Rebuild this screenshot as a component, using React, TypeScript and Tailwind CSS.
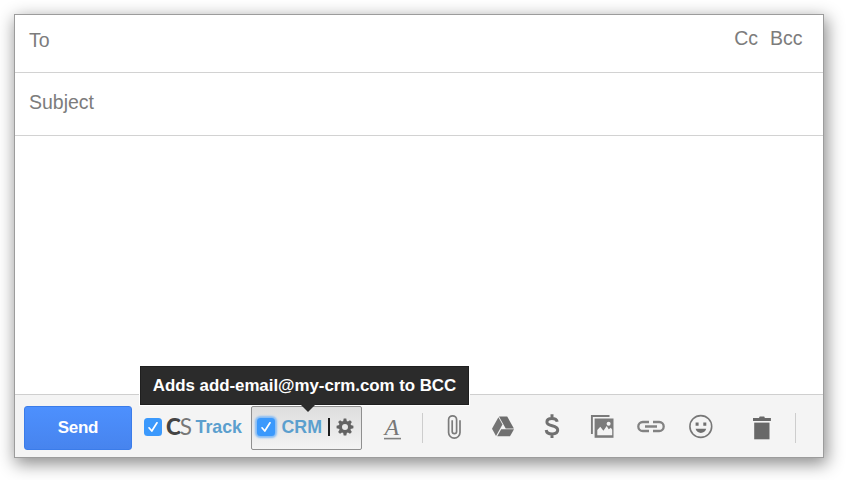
import type { ReactNode } from 'react';

function Glyph({ box, className, children }: { box: string; className: string; children: ReactNode }) {
  return (
    <svg viewBox={box} className={`shrink-0 h-[30px] ${className}`} aria-hidden="true">
      {children}
    </svg>
  );
}

function Checkbox({ glow = false }: { glow?: boolean }) {
  return (
    <span
      className={`flex size-[18px] shrink-0 items-center justify-center rounded-[3.5px] bg-[#3b99fc] ${
        glow ? 'shadow-[0_0_2px_2px_#85bcf6]' : ''
      }`}
    >
      <svg viewBox="0 0 18 18" className="size-[18px]" aria-hidden="true">
        <path d="M5 9.8 7.8 13 13 4.8" fill="none" stroke="#fff" strokeWidth="1.7" strokeLinecap="round" strokeLinejoin="round" />
      </svg>
    </span>
  );
}

function Gear() {
  const teeth = [0, 45, 90, 135, 180, 225, 270, 315];
  return (
    <svg viewBox="-9 -9 18 18" className="ml-[6.5px] size-[18px] shrink-0" aria-hidden="true">
      <circle r="4.6" fill="none" stroke="#636363" strokeWidth="3.2" />
      {teeth.map((a) => (
        <path key={a} d="M-1.9-5.5-1.3-8.4H1.3L1.9-5.5Z" fill="#636363" transform={`rotate(${a})`} />
      ))}
    </svg>
  );
}

function Toolbar() {
  return (
    <div className="flex h-[63px] items-start border-t border-[#cfcfcf] bg-[#f4f4f4] pl-[9px] pt-[11px]">
      <div className="flex h-[44px] items-center">
        <button className="flex h-[44px] w-[108px] items-center justify-center rounded-[3px] border border-[#3b7ce9] bg-linear-to-b from-[#4d90fe] to-[#4784ee] pb-px text-[17px] font-bold tracking-[-0.3px] text-white">
          Send
        </button>
        <div className="ml-[12px] flex w-[107px] items-center pb-[2px]">
          <Checkbox />
          <span className="ml-[4px] flex w-[29.5px] font-[Lato] text-[22.5px] leading-[20px] tracking-[-1px]">
            <span className="font-black text-[#444]">C</span>
            <span className="font-normal text-[#777]">S</span>
          </span>
          <span className="text-[17.8px] leading-[20px] font-bold text-[#5b9fce]">Track</span>
        </div>
        <div className="relative flex h-[44px] w-[111px] items-center rounded-[2px] border border-[#8f8f8f] bg-linear-to-b from-[#dedede] to-[#f3f3f3] pb-[2px] pl-[5px]">
          <Checkbox glow />
          <span className="ml-[6.5px] w-[44.5px] text-[17.8px] leading-[20px] font-bold text-[#5b9fce]">CRM</span>
          <span className="ml-[2px] h-[18px] w-[1.5px] bg-[#1c1c1c]" />
          <Gear />
          <div className="absolute -top-[41px] -left-[112px] flex h-[39px] w-[329px] items-center justify-center border border-[#1f1f1f] bg-[#2b2b2b] text-[16.9px] font-bold tracking-[-0.04px] whitespace-nowrap text-white outline outline-white">
            Adds add-email@my-crm.com to BCC
            <span className="absolute top-[37px] left-[159px] h-[8px] w-[16px] bg-[#2b2b2b] [clip-path:polygon(0_0,100%_0,50%_100%)]" />
          </div>
        </div>

        <Glyph box="382 413 22 30" className="ml-[20px] w-[22px]">
          <text x="384.6" y="434.6" fontFamily="Liberation Serif, serif" fontStyle="italic" fontSize="24" fill="#777">A</text>
          <path d="M384 438.6H401" stroke="#808080" strokeWidth="1.6" />
        </Glyph>
        <span className="ml-[18px] h-[30px] w-px bg-[#cdcdcd]" />
        <Glyph box="445 413 18 30" className="ml-[22px] w-[18px]">
          <path
            d="M460 420.2v12.3a5.7 5.7 0 0 1-11.4 0V419.8a4 4 0 0 1 8 0v11.6a2.2 2.2 0 0 1-4.4 0V420.2"
            fill="none" stroke="#7b7b7b" strokeWidth="1.7"
          />
        </Glyph>
        <Glyph box="491 413 24 30" className="ml-[28px] w-[24px]">
          <path d="M499 416.6h8.2l6.7 11.9h-8.2Z" fill="#6d6d6d" />
          <path d="M498.4 417.2 502.5 424.4 496 435.9 492 428.7Z" fill="#747474" />
          <path d="M501.2 429.2H514L510 436.3H497.2Z" fill="#707070" />
        </Glyph>
        <Glyph box="543 413 18 30" className="ml-[28px] w-[18px]">
          <path
            d="M557.2 421.8c-.5-2.3-2.2-3.3-5.3-3.3-3.2 0-5 1.2-5 3.5 0 5.2 10.8 2.4 10.8 8.1 0 2.6-2.3 3.9-5.6 3.9-3.5 0-5.6-1.5-5.9-4M552 414.2v4M552 434v4"
            fill="none" stroke="#707070" strokeWidth="3"
          />
        </Glyph>
        <Glyph box="590 413 26 30" className="ml-[29px] w-[26px]">
          <path d="M591.9 434V416H609.5" fill="none" stroke="#7a7a7a" strokeWidth="1.9" />
          <path d="M594.6 418.5H613.5V437.8H594.6Z" fill="#7b7b7b" />
          <path d="M597.3 435.3V430l3-3.3 3.1 4 3.3-4.7 2 3.2 2.2-1.4 1.3 2V435.3Z" fill="#f4f4f4" />
          <circle cx="608.6" cy="423.7" r="2" fill="#f4f4f4" />
        </Glyph>
        <Glyph box="636 413 30 30" className="ml-[20px] w-[30px]">
          <path d="M649 422h-6.2a4.5 4.5 0 0 0 0 9H649M653 422h6.2a4.5 4.5 0 0 1 0 9H653M645 426.5H657" fill="none" stroke="#828282" strokeWidth="2.3" />
        </Glyph>
        <Glyph box="688 413 26 30" className="ml-[22px] w-[26px]">
          <circle cx="700.8" cy="426.5" r="10.9" fill="none" stroke="#777" strokeWidth="1.6" />
          <path d="M695.6 422.5h3v3.2h-3ZM703.3 422.5h3v3.2h-3Z" fill="#707070" />
          <path d="M695.6 428.8h10.6c-.7 2.6-2.6 4.1-5.3 4.1s-4.6-1.5-5.3-4.1Z" fill="#707070" />
        </Glyph>
        <Glyph box="751 413 22 30" className="ml-[37px] w-[22px]">
          <path d="M753 418h6l.7-1.5h4.5l.7 1.5h6v3H753Z" fill="#686868" />
          <path d="M754.2 422.6H769.5V439.3H754.2Z" fill="#686868" />
        </Glyph>
        <span className="ml-[22px] h-[30px] w-px bg-[#cdcdcd]" />
      </div>
    </div>
  );
}

export default function App() {
  return (
    <div className="h-[480px] w-[846px] overflow-hidden bg-white pt-[14px] pl-[14px] font-['Liberation_Sans',Arial,sans-serif] [&_svg]:block">
      <div className="flex h-[444px] w-[810px] flex-col border border-[#9c9c9c] bg-white shadow-[2px_5px_16px_1px_rgba(0,0,0,0.45)]">
        <div className="flex h-[58px] items-start justify-between border-b border-[#d2d2d2] pr-[20.5px] pl-[14px] text-[19.5px] leading-[22px] text-[#7c7c7c]">
          <span className="pt-[14px]">To</span>
          <span className="flex gap-[12px] pt-[12px]">
            <span>Cc</span>
            <span>Bcc</span>
          </span>
        </div>
        <div className="h-[63px] border-b border-[#d2d2d2] pt-[18px] pl-[14px] text-[19.5px] leading-[22px] text-[#7c7c7c]">
          Subject
        </div>
        <div className="flex-1" />
        <Toolbar />
      </div>
    </div>
  );
}
